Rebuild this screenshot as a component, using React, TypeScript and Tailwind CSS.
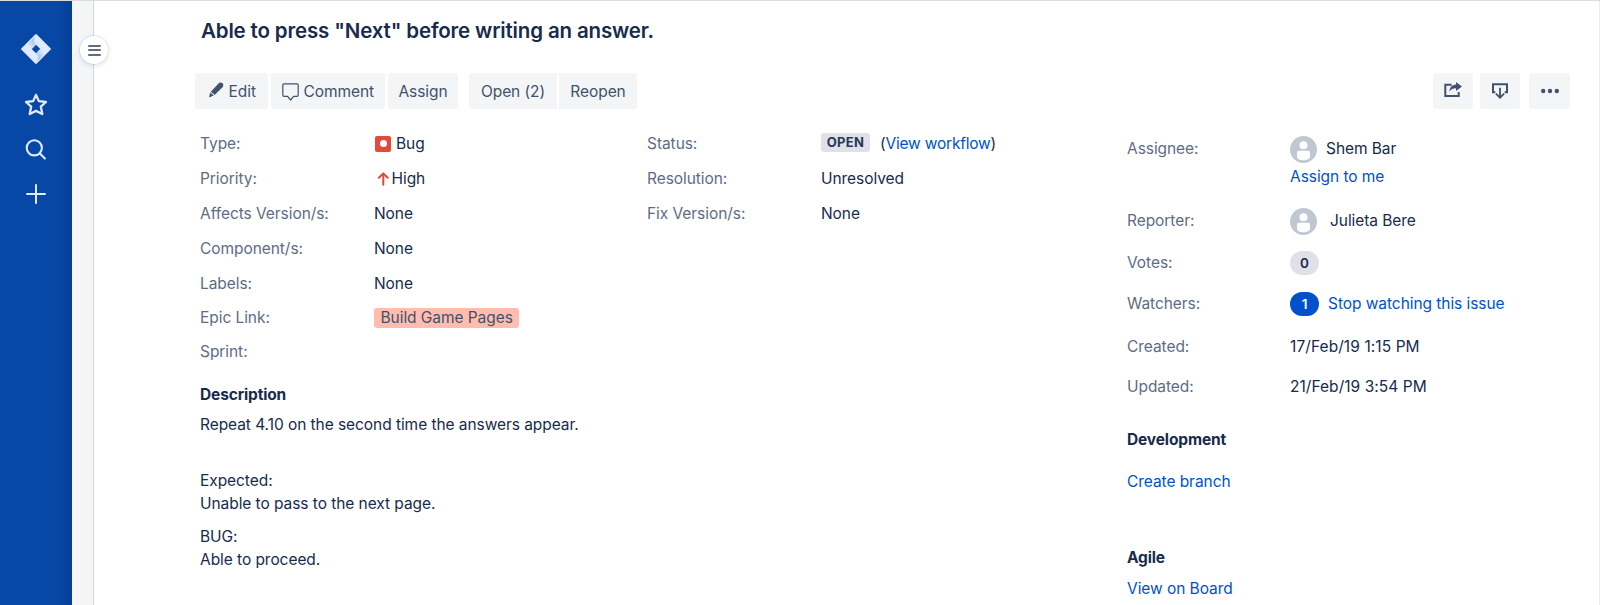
import type { ReactNode } from 'react';

function JiraMark() {
  return (
    <svg width="30" height="30" viewBox="0 0 30 30">
      <defs>
        <linearGradient id="markUpper" x1="15" y1="7" x2="8" y2="13" gradientUnits="userSpaceOnUse">
          <stop offset="0" stopColor="#a3bdeb" />
          <stop offset="1" stopColor="#deebff" />
        </linearGradient>
        <linearGradient id="markLower" x1="15" y1="23" x2="22" y2="17" gradientUnits="userSpaceOnUse">
          <stop offset="0" stopColor="#a3bdeb" />
          <stop offset="1" stopColor="#deebff" />
        </linearGradient>
      </defs>
      <path
        fill="#deebff"
        fillRule="evenodd"
        d="M14.2.5a1.100 1.100 0 0 1 1.600 0l13.700 13.700a1.100 1.100 0 0 1 0 1.600L15.800 29.500a1.100 1.100 0 0 1-1.600 0L.5 15.800a1.100 1.100 0 0 1 0-1.600zM15 10.700L10.700 15l4.300 4.300 4.300-4.300z"
      />
      <path fill="url(#markUpper)" d="M14.600 2c-2.200 3-2.200 6.200.4 8.700L10.700 15 6 10.300z" />
      <path fill="url(#markLower)" d="M15.400 28c2.200-3 2.200-6.200-.4-8.700L19.300 15 24 19.700z" />
    </svg>
  );
}

function StarIcon() {
  return (
    <svg width="24" height="24" viewBox="0 0 24 24" fill="none" stroke="#deebff" strokeWidth="2.300" strokeLinejoin="round">
      <path d="M12 1.900l2.800 6.200 7.200.9-5.200 4.600 1.500 7.400L12 17.900l-6.300 3.100 1.500-7.400L2 9l7.200-.9z" />
    </svg>
  );
}

function SearchIcon() {
  return (
    <svg width="24" height="24" viewBox="0 0 24 24" fill="none" stroke="#deebff" strokeWidth="2.100" strokeLinecap="round">
      <circle cx="10.300" cy="9.800" r="7.600" />
      <path d="M15.900 15.400l5 5" />
    </svg>
  );
}

function PlusIcon() {
  return (
    <svg width="24" height="24" viewBox="0 0 24 24" fill="none" stroke="#deebff" strokeWidth="2" strokeLinecap="round">
      <path d="M12 3v18M3 12h18" />
    </svg>
  );
}

function PencilIcon() {
  return (
    <svg width="15" height="16" viewBox="0 0 15 16" fill="#42526e">
      <path d="M9.300 1.700c1.300-1.300 2.700-1.600 4-.5s1.300 2.700.2 4L5.700 13 1.800 9.800z" />
      <path d="M1.200 10.600l3.500 2.900-4 1.700c-.4.1-.6 0-.5-.4z" />
    </svg>
  );
}

function CommentIcon() {
  return (
    <svg width="17" height="18" viewBox="0 0 17 18" fill="none" stroke="#42526e" strokeWidth="1.200" strokeLinejoin="round">
      <path d="M2.100.8h12.800a1.300 1.300 0 0 1 1.300 1.300v10a1.300 1.300 0 0 1-1.300 1.300h-3.300L8.600 17l-3-3.600H2.100A1.300 1.300 0 0 1 .8 12.100v-10A1.300 1.300 0 0 1 2.100.8z" />
    </svg>
  );
}

function ShareIcon() {
  return (
    <svg width="20" height="18" viewBox="0 0 20 18">
      <path d="M8.600 3.700H2.300v11.400h13.400v-4" fill="none" stroke="#42526e" strokeWidth="2" />
      <path d="M13 1l6 4.500-6 4.400V7.300c-3 0-4.800 1-6.600 3.300.2-4.200 2.400-6.700 6.600-7z" fill="#42526e" />
    </svg>
  );
}

function ExportIcon() {
  return (
    <svg width="18" height="18" viewBox="0 0 18 18" fill="none" stroke="#42526e" strokeWidth="2">
      <path d="M4.300 10.200H2V2.300h14v7.900h-2.300" />
      <path d="M9 5.800v9.600M4.900 11.600L9 15.700l4.100-4.100" strokeWidth="1.800" />
    </svg>
  );
}

function MoreIcon() {
  return (
    <svg width="20" height="6" viewBox="0 0 20 6" fill="#42526e">
      <circle cx="3.200" cy="3" r="2.200" />
      <circle cx="10" cy="3" r="2.200" />
      <circle cx="16.800" cy="3" r="2.200" />
    </svg>
  );
}

function Avatar() {
  return (
    <svg width="27" height="27" viewBox="0 0 27 27">
      <circle cx="13.500" cy="13.500" r="13.500" fill="#c1c7d0" />
      <circle cx="13.500" cy="9.300" r="4" fill="#fff" />
      <path d="M9 14.800h9a2 2 0 0 1 2 2v4.200c0 2-3.200 3.200-6.500 3.200S7 23 7 21v-4.200a2 2 0 0 1 2-2z" fill="#fff" />
    </svg>
  );
}

function Button({ className, children }: { className: string; children: ReactNode }) {
  return (
    <button className={`flex h-9 items-center bg-[#f4f5f7] whitespace-nowrap text-[#42526e] ${className}`}>{children}</button>
  );
}

function Field({ label, className = 'h-[34.8px]', children }: { label: string; className?: string; children?: ReactNode }) {
  return (
    <div className={`flex items-center ${className}`}>
      <span className="w-[174px] shrink-0 text-[#5e6c84]">{label}</span>
      {children}
    </div>
  );
}

function Detail({ label, className = '', children }: { label: string; className?: string; children: ReactNode }) {
  return (
    <div className={`flex h-[27px] items-center ${className}`}>
      <span className="w-[163px] shrink-0 text-[#5e6c84]">{label}</span>
      {children}
    </div>
  );
}

export default function App() {
  return (
    <div className="flex h-[605px] w-[1600px] overflow-hidden border-t border-[#dcdcdc] bg-white font-['Inter',sans-serif] text-[15.5px] leading-[22.6px] tracking-[-0.06px] text-[#172b4d]">
      <aside className="flex w-[72px] shrink-0 flex-col items-center bg-linear-to-r from-[#0747a6] from-80% to-[#063e92] pt-[33px]">
        <JiraMark />
        <div className="mt-[29px] flex flex-col gap-[20.500px]">
          <StarIcon />
          <SearchIcon />
          <PlusIcon />
        </div>
      </aside>
      <div className="relative w-[22px] shrink-0 border-r border-[#d5d7db] bg-[#f4f5f7]">
        <button className="absolute top-[35px] left-[8px] flex size-7 flex-col items-center justify-center gap-[2.500px] rounded-full bg-white shadow-[0_0_0_1px_rgba(9,30,66,0.08),0_2px_4px_1px_rgba(9,30,66,0.08)]">
          <span className="h-[2px] w-[13px] rounded-full bg-[#5e6c84]" />
          <span className="h-[2px] w-[13px] rounded-full bg-[#5e6c84]" />
          <span className="h-[2px] w-[13px] rounded-full bg-[#5e6c84]" />
        </button>
      </div>
      <main className="flex flex-1 flex-col border-r border-[#ebecf0]">
        <h1 className="h-[72px] pt-[15px] pl-[107px] text-[20.500px] leading-[29px] font-[560] tracking-[-0.150px]">
          Able to press "Next" before writing an answer.
        </h1>
        <div className="flex h-9 justify-between pr-[29px] pl-[101px]">
          <div className="flex">
            <Button className="w-[73px] gap-[4.500px] rounded-[3px] pt-[2px] pl-[14px]">
              <span className="pb-[4px]">
                <PencilIcon />
              </span>
              Edit
            </Button>
            <Button className="ml-[3px] w-[114px] gap-[4.500px] rounded-[3px] pt-[2px] pl-[11px]">
              <CommentIcon />
              Comment
            </Button>
            <Button className="ml-[3px] w-[70px] justify-center rounded-[3px] pt-[2px]">Assign</Button>
            <Button className="ml-[11px] w-[88px] justify-center rounded-l-[3px] pt-[2px]">Open (2)</Button>
            <Button className="ml-[2px] w-[78px] justify-center rounded-r-[3px] pt-[2px]">Reopen</Button>
          </div>
          <div className="flex">
            <Button className="w-10 justify-center rounded-[3px]">
              <span className="pb-[3px]">
                <ShareIcon />
              </span>
            </Button>
            <Button className="ml-[7px] w-10 justify-center rounded-[3px]">
              <ExportIcon />
            </Button>
            <Button className="ml-[9px] w-[41px] justify-center rounded-[3px]">
              <MoreIcon />
            </Button>
          </div>
        </div>
        <div className="flex">
          <div className="w-[1033px] shrink-0 pt-[18.400px] pl-[106px]">
            <div className="flex">
              <div className="w-[447px]">
                <Field label="Type:">
                  <span className="mb-[2px] ml-px flex size-4 items-center justify-center rounded-[2px] bg-[#e5493a]">
                    <span className="size-[7px] rounded-full bg-white" />
                  </span>
                  <span className="ml-[5px]">Bug</span>
                </Field>
                <Field label="Priority:">
                  <svg className="mb-[2px] ml-[2.500px]" width="13" height="14" viewBox="0 0 13 14" fill="none" stroke="#e5493a" strokeWidth="2" strokeLinecap="round" strokeLinejoin="round">
                    <path d="M6.300 12.800V1.600M1.900 5.800l4.400-4.400 4.400 4.400" />
                  </svg>
                  <span className="ml-[2px]">High</span>
                </Field>
                <Field label="Affects Version/s:">None</Field>
                <Field label="Component/s:">None</Field>
                <Field label="Labels:">None</Field>
                <Field label="Epic Link:">
                  <span className="mb-[2px] h-5 rounded-[3px] bg-[#ffbdad] px-[6.500px] leading-5 text-[#42526e]">Build Game Pages</span>
                </Field>
                <Field label="Sprint:" className="h-8" />
              </div>
              <div>
                <Field label="Status:">
                  <span className="mb-[4px] h-[19px] w-[49px] rounded-[3px] bg-[#dfe1e6] text-center text-[13px] leading-[19px] font-bold tracking-[0.300px] text-[#253858]">
                    OPEN
                  </span>
                  <span className="ml-[10px] tracking-[-0.200px]">
                    (<a className="text-[#0052cc]">View workflow</a>)
                  </span>
                </Field>
                <Field label="Resolution:">Unresolved</Field>
                <Field label="Fix Version/s:">None</Field>
              </div>
            </div>
            <h2 className="mt-[15.500px] font-bold tracking-[-0.140px]">Description</h2>
            <p className="mt-[8px]">Repeat 4.10 on the second time the answers appear.</p>
            <p className="mt-[33.300px]">
              Expected:
              <br />
              Unable to pass to the next page.
            </p>
            <p className="mt-[11px]">
              BUG:
              <br />
              Able to proceed.
            </p>
          </div>
          <div className="pt-[27px]">
            <Detail label="Assignee:">
              <Avatar />
              <span className="ml-[9px]">Shem Bar</span>
            </Detail>
            <div className="flex h-[28px] items-center pl-[163px]">
              <a className="text-[#0052cc]">Assign to me</a>
            </div>
            <Detail label="Reporter:" className="mt-[17px]">
              <Avatar />
              <span className="ml-[13px]">Julieta Bere</span>
            </Detail>
            <Detail label="Votes:" className="mt-[14.500px]">
              <span className="h-6 w-[29px] rounded-full bg-[#dfe1e6] text-center text-[13.500px] leading-6 font-semibold">0</span>
            </Detail>
            <Detail label="Watchers:" className="mt-[14.500px]">
              <span className="mb-[2px] h-6 w-[29px] rounded-full bg-[#0052cc] text-center text-[13.500px] leading-6 font-semibold text-white">1</span>
              <a className="ml-[9px] text-[#0052cc]">Stop watching this issue</a>
            </Detail>
            <Detail label="Created:" className="mt-[16px]">
              <span className="tracking-[0.080px]">17/Feb/19 1:15 PM</span>
            </Detail>
            <Detail label="Updated:" className="mt-[13px]">
              <span className="tracking-[0.040px]">21/Feb/19 3:54 PM</span>
            </Detail>
            <h2 className="mt-[27.500px] font-bold tracking-[-0.140px]">Development</h2>
            <a className="mt-[19.500px] block text-[#0052cc]">Create branch</a>
            <h2 className="mt-[54px] font-bold tracking-[-0.140px]">Agile</h2>
            <a className="mt-[7.900px] block text-[#0052cc]">View on Board</a>
          </div>
        </div>
      </main>
    </div>
  );
}
